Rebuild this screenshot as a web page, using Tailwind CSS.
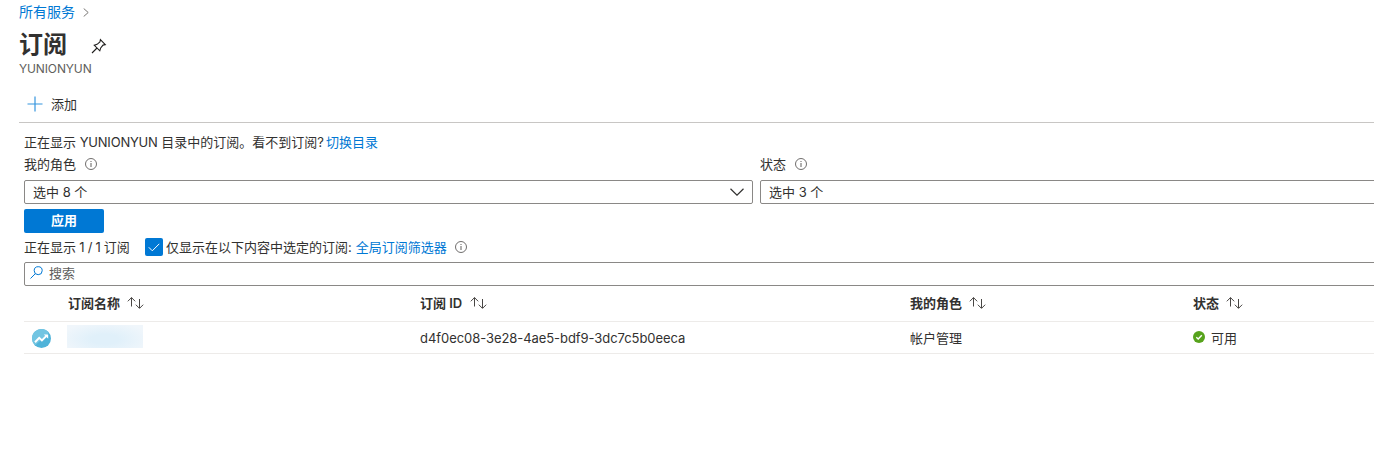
<!DOCTYPE html>
<html lang="zh-CN">
<head>
<meta charset="utf-8">
<title>订阅</title>
<script src="https://cdn.jsdelivr.net/npm/@tailwindcss/browser@4"></script>
</head>
<body class="bg-white">
<svg class="hidden">
  <symbol id="info" viewBox="0 0 12 12"><circle cx="6" cy="6" r="5.5" fill="none" stroke="#605e5c" stroke-width=".9"/><path d="M6 5v4M6 3v1" stroke="#605e5c" stroke-width="1" fill="none"/></symbol>
  <symbol id="sort" viewBox="0 0 17 14"><path d="M4.500 10.500V1.500M.8 5.300 4.500 1.600l3.700 3.700M12.500 3v9M8.800 8.700l3.700 3.700 3.700-3.700" fill="none" stroke="#484644" stroke-width="1"/></symbol>
</svg>
<div class="h-[469px] w-[1374px] overflow-hidden whitespace-nowrap pl-[19px] font-['Inter','Noto_Sans_CJK_SC',sans-serif] text-[13px] leading-5 text-[#323130]">
  <nav class="flex h-[25px] items-center gap-2 text-sm text-[#0078d4]">
    <a class="-mt-[2px]">所有服务</a>
    <svg class="h-[9px] w-[6px]" viewBox="0 0 6 9" fill="none" stroke="#797775" stroke-width="1"><path d="M.7.5 5.2 4.5.7 8.500"/></svg>
  </nav>
  <header class="pt-1">
    <div class="flex h-8 items-center gap-6">
      <h1 class="text-2xl font-bold">订阅</h1>
      <svg class="mt-[2px] h-4 w-4" viewBox="0 0 16 16" fill="none" stroke="#201f1e" stroke-width="1.1"><path d="M1 15l5-5M3.200 7.200l5.600 5.600.9-2.900 2.300-2.800 2.300-.5L9.400 1.700 8.900 4 6.100 6.300z"/></svg>
    </div>
    <p class="h-4 text-xs leading-4 tracking-[-0.12px] text-[#605e5c]">YUNIONYUN</p>
  </header>
  <div class="mt-[9px] flex h-[37px] items-center gap-2 border-b border-[#c8c6c4] pl-2">
    <svg class="h-4 w-4" viewBox="0 0 16 16" stroke="#3595de" stroke-width="1.2"><path d="M8 .5v15M.5 8h15"/></svg>
    <span>添加</span>
  </div>
  <main class="pl-[5px]">
    <p class="mt-[9px] flex h-5 items-center gap-[2px]"><span>正在显示 <span class="tracking-[-0.2px]">YUNIONYUN</span> 目录中的订阅。看不到订阅?</span><a class="text-[#0078d4]">切换目录</a></p>
    <div class="mt-[2px] flex gap-[7px]">
      <div class="w-[729px] shrink-0">
        <label class="flex h-5 items-center gap-[9px]">我的角色<svg class="h-3 w-3"><use href="#info"/></svg></label>
        <div class="mt-[6px] flex h-6 items-center justify-between rounded-[2px] border border-[#8a8886] px-2"><span>选中 8 个</span>
          <svg class="h-2 w-[14px]" viewBox="0 0 14 8" fill="none" stroke="#323130" stroke-width="1.2"><path d="M.5.8 7 7.200 13.500.8"/></svg></div>
      </div>
      <div class="w-[729px] shrink-0">
        <label class="flex h-5 items-center gap-[9px]">状态<svg class="h-3 w-3"><use href="#info"/></svg></label>
        <div class="mt-[6px] flex h-6 items-center rounded-[2px] border border-[#8a8886] px-2">选中 3 个</div>
      </div>
    </div>
    <button class="mt-[5px] block h-6 w-20 rounded-[2px] bg-[#0078d4] pb-[2px] font-bold leading-[22px] text-white">应用</button>
    <div class="mt-1 flex h-5 items-center">
      <span class="w-[121px]">正在显示<span class="tracking-[-0.3px]"> 1 / 1 </span>订阅</span>
      <span class="mr-[3px] flex h-[18px] w-[18px] items-center justify-center rounded-[2px] bg-[#0078d4]"><svg class="h-[9px] w-3" viewBox="0 0 12 9" fill="none" stroke="white" stroke-width="1"><path d="M.8 4.300 4.300 7.800 11.300.8"/></svg></span>
      <span>仅显示在以下内容中选定的订阅:</span>
      <a class="ml-1 text-[#0078d4]">全局订阅筛选器</a>
      <svg class="ml-2 h-3 w-3"><use href="#info"/></svg>
    </div>
    <div class="mt-[5px] flex h-6 w-[1400px] items-center gap-[6px] rounded-[2px] border border-[#8a8886] pl-[5px] text-[#605e5c]">
      <svg class="-mt-[3px] h-[13px] w-[13px]" viewBox="0 0 13 13" fill="none" stroke="#0078d4" stroke-width="1"><circle cx="8.200" cy="4.700" r="4"/><path d="M5.400 7.600.5 12.500"/></svg>
      <span class="-mt-[2px]">搜索</span>
    </div>
    <div class="grid h-9 w-[1400px] grid-cols-[44px_352px_490px_283px_1fr] items-center border-b border-[#edebe9] pb-[2px] font-bold">
      <span></span>
      <span class="flex items-center gap-[7px]">订阅名称<svg class="h-[14px] w-[17px]"><use href="#sort"/></svg></span>
      <span class="flex items-center gap-2"><span class="font-semibold">订阅 ID</span><svg class="h-[14px] w-[17px]"><use href="#sort"/></svg></span>
      <span class="flex items-center gap-[7px]">我的角色<svg class="h-[14px] w-[17px]"><use href="#sort"/></svg></span>
      <span class="flex items-center gap-[7px]">状态<svg class="h-[14px] w-[17px]"><use href="#sort"/></svg></span>
    </div>
    <div class="grid h-8 w-[1400px] grid-cols-[44px_352px_490px_283px_1fr] items-center border-b border-[#edebe9]">
      <svg class="ml-2 mt-[2px] h-[19px] w-[19px]" viewBox="0 0 19 19"><circle cx="9.500" cy="9.500" r="9.500" fill="#4fb3d9"/><path d="M0 9.500a9.500 9.500 0 0 1 17-5.800L3 16.400A9.500 9.500 0 0 1 0 9.500z" fill="#72c5e2"/><path d="M3 13.300 7.200 8.800l2.700 2.600 4.300-4.300" fill="none" stroke="white" stroke-width="2"/><path d="M11.800 5.400h4.400v4.400z" fill="white"/></svg>
      <span class="-ml-px -mt-[3px] h-[23px] w-[76px] bg-[radial-gradient(ellipse_at_50%_62%,#e0f0fa_25%,#f0f6fb_85%)]"></span>
      <span class="tracking-[-0.06px]">d4f0ec08-3e28-4ae5-bdf9-3dc7c5b0eeca</span>
      <span>帐户管理</span>
      <span class="flex items-center gap-[6px]"><svg class="-mt-[2px] h-3 w-3" viewBox="0 0 12 12"><circle cx="6" cy="6" r="6" fill="#57a31c"/><path d="M3.300 6.200 5.200 8 8.800 4.200" fill="none" stroke="white" stroke-width="1.400"/></svg>可用</span>
    </div>
  </main>
</div>
</body>
</html>
